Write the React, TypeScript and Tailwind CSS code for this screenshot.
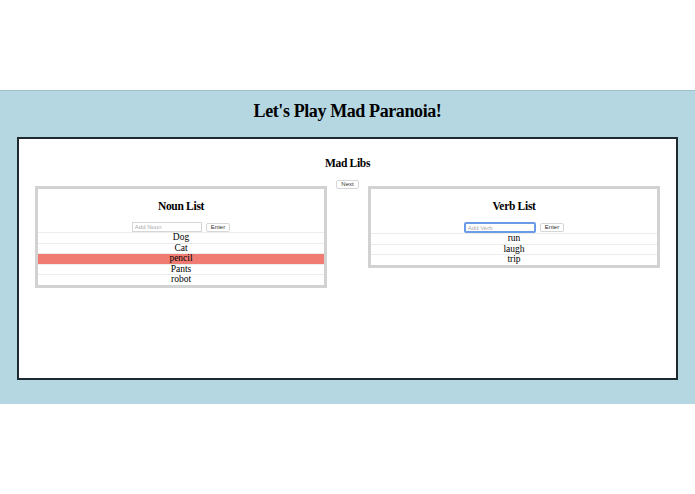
import React, { useState } from 'react';

type ListProps = {
  title: string;
  placeholder: string;
  items: string[];
  highlight?: number;
  focused?: boolean;
};

const WordList: React.FC<ListProps> = ({ title, placeholder, items, highlight, focused }) => {
  const [value, setValue] = useState('');

  return (
    <div className="w-[292px] mt-[6px] border-[3px] border-[#d2d2d2] bg-white">
      <h3 className="pt-[9px] text-center text-[11.5px] leading-[16px] font-bold tracking-[-0.3px]">{title}</h3>

      <div className="mt-[8px] flex items-center justify-center gap-[4px]">
        <input
          value={value}
          onChange={(e) => setValue(e.target.value)}
          placeholder={placeholder}
          className={
            focused
              ? 'w-[72px] h-[11px] px-[2px] rounded-[2px] border-2 border-[#6a9be6] text-[6px] font-["Liberation_Sans",sans-serif] placeholder:text-[#a8a8a8] outline-none'
              : 'w-[70px] h-[10px] px-[2px] border border-[#d6d6d6] text-[6px] font-["Liberation_Sans",sans-serif] placeholder:text-[#a8a8a8] outline-none'
          }
        />
        <button className="h-[9px] px-[4px] rounded-[2px] border border-[#d6d6d6] bg-white text-[6px] leading-[7px] font-['Liberation_Sans',sans-serif] text-[#333]">
          Enter
        </button>
      </div>

      <ul>
        {items.map((item, i) => (
          <li
            key={item}
            className={
              i === highlight
                ? 'h-[10.6px] border-t border-[#ececec] bg-[#f07b72] text-center text-[9.5px] leading-[9.6px]'
                : 'h-[10.6px] border-t border-[#ececec] text-center text-[9.5px] leading-[9.6px]'
            }
          >
            {item}
          </li>
        ))}
      </ul>
    </div>
  );
};

const App: React.FC = () => {
  return (
    <div className="min-h-screen bg-white pt-[90px] font-['Liberation_Serif',serif] text-black">
      <div className="bg-[#b5d7e1] pt-[8px] pb-[24px] border-t border-[#9fbfcb]">
        <h1 className="text-center text-[18px] leading-[24px] font-bold tracking-[-0.4px]">Let's Play Mad Paranoia!</h1>

        {/* Game board */}
        <div className="mx-[17px] mt-[14px] h-[243px] border-2 border-[#1e2a30] bg-white">
          <h2 className="pt-[16px] text-center text-[11.5px] leading-[16px] font-bold tracking-[-0.3px]">Mad Libs</h2>

          <div className="mt-[9px] flex items-start px-[16px]">
            <WordList
              title="Noun List"
              placeholder="Add Noun"
              items={['Dog', 'Cat', 'pencil', 'Pants', 'robot']}
              highlight={2}
            />

            <div className="flex flex-1 justify-center">
              <button className="h-[9px] px-[4px] rounded-[2px] border border-[#d6d6d6] bg-white text-[6px] leading-[7px] font-['Liberation_Sans',sans-serif] text-[#333]">
                Next
              </button>
            </div>

            <WordList
              title="Verb List"
              placeholder="Add Verb"
              items={['run', 'laugh', 'trip']}
              focused
            />
          </div>
        </div>
      </div>
    </div>
  );
};

export default App;
